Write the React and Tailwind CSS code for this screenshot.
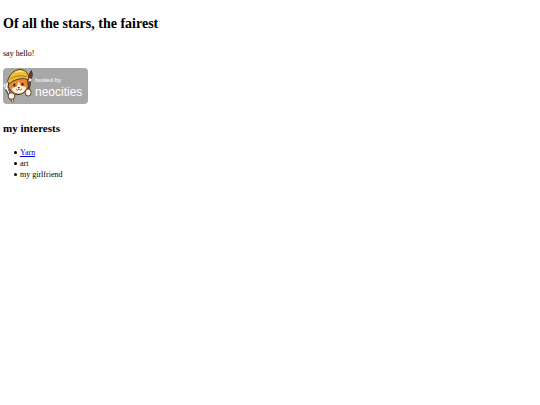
const interests = [
  { name: 'Yarn', href: '#yarn' },
  { name: 'art' },
  { name: 'my girlfriend' },
];

function NeocitiesBadge() {
  return (
    <svg className="block w-[85px] h-[36px]" viewBox="0 0 85 36" role="img" aria-label="hosted by neocities">
      <rect width="85" height="36" rx="4" fill="#a8a8a8" />

      {/* fork */}
      <g fill="none" strokeLinecap="round">
        <path d="M3.2 20 L9.5 32.5" stroke="#444" strokeWidth="3.2" />
        <path d="M1.2 16.5 L2.2 20 Q3.8 22 5.3 20 L4.8 15.5 M3.1 15.8 L4 21 L9.8 33" stroke="#f4f4f4" strokeWidth="1.3" />
      </g>

      {/* brush */}
      <path d="M27.5 11 L25 24" stroke="#332722" strokeWidth="2.4" strokeLinecap="round" />
      <path d="M27.3 12 L25.2 23" stroke="#c33b3b" strokeWidth="1.1" />
      <path d="M26.3 10.5 Q25 6 28.5 2.5 Q30.3 7 28.3 10.8 Z" fill="#9c302c" stroke="#362322" strokeWidth="0.8" />
      <path d="M26 10.2 L28.8 10.7 L28.2 13.5 L25.8 13 Z" fill="#eee" />

      {/* cat */}
      <path d="M7 10 L5 19 L8.5 24 Q14 29 21 24.5 L25.5 19 L24 9 Z" fill="#e98632" stroke="#3b2a20" strokeWidth="1" />
      <path d="M8.5 21 Q11 18.5 14 18.5 L15.5 13 L18 18 Q22 18 23.5 20 Q21 25.5 15.5 25.5 Q10.5 25 8.5 21 Z" fill="#fff1dd" />
      <path d="M4.5 13.5 Q6 6 12.5 2.5 Q17-.2 21.5 2.5 Q26.5 6 25.5 12 Q21.5 9.5 16 11 Q10 12 6.5 15.5 Z" fill="#edbd32" stroke="#57401d" strokeWidth="1" />
      <path d="M7 11 Q14 6 24 8.8" fill="none" stroke="#9b6a20" strokeWidth="0.8" />
      <path d="M12.5 4.5 Q16 2.4 20.5 4" fill="none" stroke="#fae080" strokeWidth="1.4" />
      <ellipse cx="11.3" cy="17" rx="1.1" ry="1.5" fill="#342720" />
      <ellipse cx="19.5" cy="16.3" rx="1.1" ry="1.5" fill="#342720" />
      <path d="M14.5 19 H17 L15.9 20.7 Z" fill="#4b2c25" />
      <path d="M13 21.5 Q14.8 23.2 15.9 21 Q17.5 23 19 21" fill="none" stroke="#7b4b35" strokeWidth="0.8" />

      {/* paws */}
      <ellipse cx="8.5" cy="28" rx="3.4" ry="3.3" fill="#fff3df" stroke="#493529" strokeWidth="0.9" />
      <ellipse cx="25.2" cy="24.5" rx="3" ry="3.6" fill="#fff3df" stroke="#493529" strokeWidth="0.9" />

      <g fill="#fff" className="font-['Liberation_Sans',sans-serif]">
        <text x="32" y="14" fontSize="6">hosted by</text>
        <text x="32" y="28" fontSize="12">neocities</text>
      </g>
    </svg>
  );
}

export default function App() {
  return (
    <main className="min-h-screen bg-[#fefefe] px-[3px] pt-3 text-black font-['Liberation_Serif',serif] text-[8px] leading-[11px]">
      <h1 className="text-[14px] leading-6 font-bold">Of all the stars, the fairest</h1>
      <p className="mt-3">say hello!</p>
      <a href="#neocities" className="mt-[9px] block w-fit">
        <NeocitiesBadge />
      </a>
      <h2 className="mt-4 text-[11px] leading-4 font-bold">my interests</h2>
      <ul className="mt-[11px] pl-[11px]">
        {interests.map(({ name, href }) => (
          <li key={name} className="flex items-center gap-[3px] before:size-[3px] before:rounded-full before:bg-black">
            {href ? <a href={href} className="text-[#0000ee] underline">{name}</a> : name}
          </li>
        ))}
      </ul>
    </main>
  );
}
